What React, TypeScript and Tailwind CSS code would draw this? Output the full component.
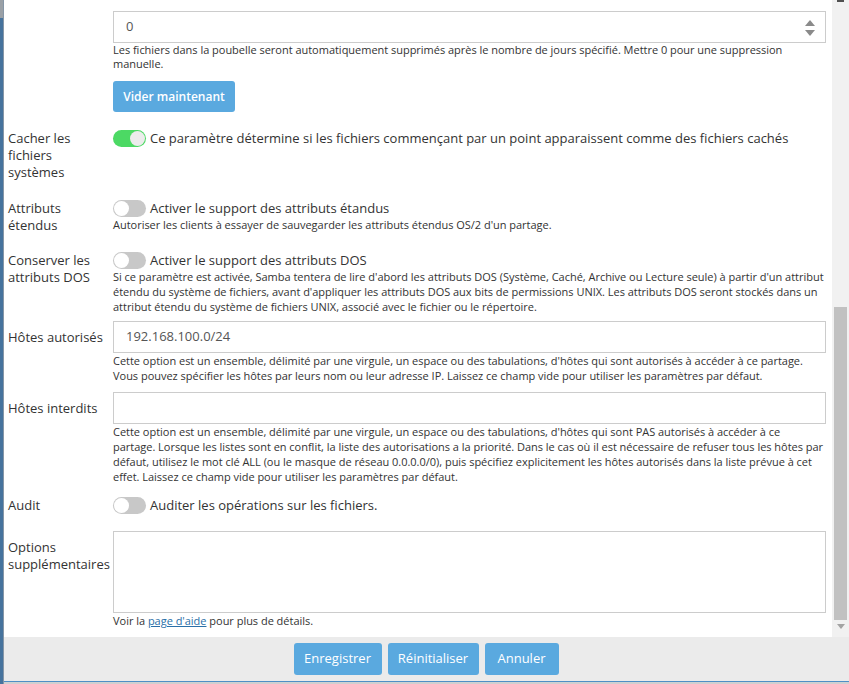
import type { ReactNode } from 'react';

const font = { fontFamily: '"Open Sans", "Liberation Sans", sans-serif' };

function Toggle({ on = false }: { on?: boolean }) {
	return (
		<span
			className={`relative inline-block w-[33px] h-[17px] rounded-full shrink-0 ${on ? 'bg-[#4cd964]' : 'bg-[#c8c8c8]'}`}
		>
			<span
				className={`absolute top-[1px] w-[15px] h-[15px] rounded-full ${on ? 'left-[17px] bg-[#ececec]' : 'left-[1px] bg-white'}`}
			/>
		</span>
	);
}

// lines are broken by hand so they wrap where the original does
function Help({ lines, tight = false }: { lines: ReactNode[]; tight?: boolean }) {
	return (
		<div className={`text-[11px] tracking-[-0.02px] text-[#333] ${tight ? 'leading-[14px]' : 'leading-[15px]'}`}>
			{lines.map((l, i) => (
				<div key={i} className="whitespace-nowrap">{l}</div>
			))}
		</div>
	);
}

function Row({ label, children, className = '' }: { label?: ReactNode; children: ReactNode; className?: string }) {
	return (
		<div className={`flex ${className}`}>
			<div className="w-[105px] shrink-0 text-[13px] leading-[17px] text-[#333]">{label}</div>
			<div className="flex-1 min-w-0">{children}</div>
		</div>
	);
}

function SwitchLine({ on, text }: { on?: boolean; text: string }) {
	return (
		<div className="flex items-center gap-[4px] h-[17px] text-[13px] text-[#333]">
			<Toggle on={on} />
			<span>{text}</span>
		</div>
	);
}

function TextInput({ value = '', spin = false }: { value?: string; spin?: boolean }) {
	return (
		<div className="relative h-[32px] border border-[#cccccc] bg-white flex items-center pl-[12px] text-[13px] text-[#555]">
			{value}
			{spin && (
				<div className="absolute right-[10px] top-[8px] flex flex-col gap-[4px]">
					<svg width="10" height="6" viewBox="0 0 10 6"><path d="M0 6 L5 0 L10 6 Z" fill="#8a8a8a" /></svg>
					<svg width="10" height="6" viewBox="0 0 10 6"><path d="M0 0 L5 6 L10 0 Z" fill="#8a8a8a" /></svg>
				</div>
			)}
		</div>
	);
}

export default function App() {
	return (
		<div className="w-[849px] h-[684px] overflow-hidden flex bg-[#d6d6d6]" style={font}>
			{/* page behind the dialog */}
			<div className="w-[3px] shrink-0 flex flex-col">
				<div className="h-[18px] bg-[#9aa0a6]" />
				<div className="flex-1 bg-[#46739d]" />
			</div>

			<div className="flex-1 flex flex-col border-l border-[#8696a6]">
				<div className="h-[637px] flex bg-white">
					<div className="flex-1 min-w-0 pl-[4px] pr-[6px] pt-[11px]">
						<Row>
							<TextInput value="0" spin />
							<Help
								tight
								lines={[
									'Les fichiers dans la poubelle seront automatiquement supprimés après le nombre de jours spécifié. Mettre 0 pour une suppression',
									'manuelle.',
								]}
							/>
							<button className="mt-[10px] h-[31px] w-[122px] rounded-[3px] bg-[#5aa9df] text-white text-[12px] font-semibold">
								Vider maintenant
							</button>
						</Row>

						<Row className="mt-[18px]" label={<>Cacher les<br />fichiers<br />systèmes</>}>
							<SwitchLine on text="Ce paramètre détermine si les fichiers commençant par un point apparaissent comme des fichiers cachés" />
						</Row>

						<Row className="mt-[19px]" label={<>Attributs<br />étendus</>}>
							<SwitchLine text="Activer le support des attributs étandus" />
							<Help lines={["Autoriser les clients à essayer de sauvegarder les attributs étendus OS/2 d'un partage."]} />
						</Row>

						<Row className="mt-[18px]" label={<>Conserver les<br />attributs DOS</>}>
							<SwitchLine text="Activer le support des attributs DOS" />
							<Help
								lines={[
									"Si ce paramètre est activée, Samba tentera de lire d'abord les attributs DOS (Système, Caché, Archive ou Lecture seule) à partir d'un attribut",
									"étendu du système de fichiers, avant d'appliquer les attributs DOS aux bits de permissions UNIX. Les attributs DOS seront stockés dans un",
									'attribut étendu du système de fichiers UNIX, associé avec le fichier ou le répertoire.',
								]}
							/>
						</Row>

						<Row className="mt-[7px]" label={<div className="pt-[8px]">Hôtes autorisés</div>}>
							<TextInput value="192.168.100.0/24" />
							<Help
								lines={[
									"Cette option est un ensemble, délimité par une virgule, un espace ou des tabulations, d'hôtes qui sont autorisés à accéder à ce partage.",
									'Vous pouvez spécifier les hôtes par leurs nom ou leur adresse IP. Laissez ce champ vide pour utiliser les paramètres par défaut.',
								]}
							/>
						</Row>

						<Row className="mt-[9px]" label={<div className="pt-[8px]">Hôtes interdits</div>}>
							<TextInput />
							<Help
								lines={[
									"Cette option est un ensemble, délimité par une virgule, un espace ou des tabulations, d'hôtes qui sont PAS autorisés à accéder à ce",
									'partage. Lorsque les listes sont en conflit, la liste des autorisations a la priorité. Dans le cas où il est nécessaire de refuser tous les hôtes par',
									'défaut, utilisez le mot clé ALL (ou le masque de réseau 0.0.0.0/0), puis spécifiez explicitement les hôtes autorisés dans la liste prévue à cet',
									'effet. Laissez ce champ vide pour utiliser les paramètres par défaut.',
								]}
							/>
						</Row>

						<Row className="mt-[13px]" label="Audit">
							<SwitchLine text="Auditer les opérations sur les fichiers." />
						</Row>

						<Row className="mt-[17px]" label={<div className="pt-[8px]">Options<br />supplémentaires</div>}>
							<div className="h-[82px] border border-[#cccccc] bg-white" />
							<Help
								lines={[
									<>
										Voir la <span className="text-[#2a6fa8] underline">page d'aide</span> pour plus de détails.
									</>,
								]}
							/>
						</Row>
					</div>

					{/* scrollbar */}
					<div className="w-[17px] shrink-0 bg-[#f1f1f1] flex flex-col items-center">
						<div className="h-[2px] w-[7px] bg-[#505050]" />
						<div className="h-[305px]" />
						<div className="w-[13px] h-[313px] bg-[#c1c1c1]" />
						<svg className="mt-[4px]" width="8" height="5" viewBox="0 0 8 5"><path d="M0 0 L4 5 L8 0 Z" fill="#a3a3a3" /></svg>
					</div>
				</div>

				<div className="h-[44px] bg-[#ebebeb] flex items-center justify-center gap-[6px] pr-[1px]">
					<button className="h-[32px] w-[88px] rounded-[3px] bg-[#5aa9df] text-white text-[13px]">Enregistrer</button>
					<button className="h-[32px] w-[91px] rounded-[3px] bg-[#5aa9df] text-white text-[13px]">Réinitialiser</button>
					<button className="h-[32px] w-[74px] rounded-[3px] bg-[#5aa9df] text-white text-[13px]">Annuler</button>
				</div>
				<div className="h-[1px] bg-[#4f8fc6]" />
				<div className="flex-1 bg-[#d0d0d0]" />
			</div>
		</div>
	);
}
